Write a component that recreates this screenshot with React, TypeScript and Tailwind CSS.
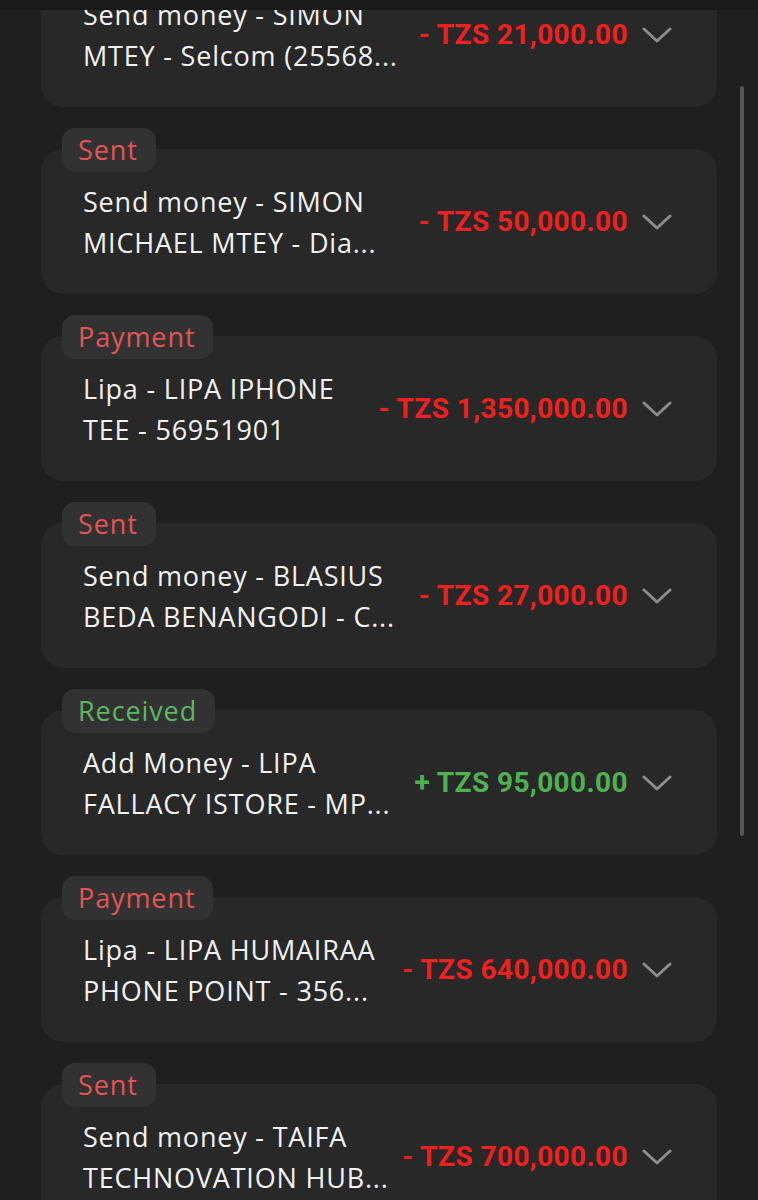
import React from "react";

type Tx = {
  badge?: string;
  kind: "sent" | "payment" | "received";
  line1: string;
  line2: string;
  amount: string;
};

const items: Tx[] = [
  { kind: "sent", badge: "Sent", line1: "Send money - SIMON", line2: "MTEY - Selcom (25568...", amount: "- TZS 21,000.00" },
  { kind: "sent", badge: "Sent", line1: "Send money - SIMON", line2: "MICHAEL MTEY - Dia...", amount: "- TZS 50,000.00" },
  { kind: "payment", badge: "Payment", line1: "Lipa - LIPA IPHONE", line2: "TEE - 56951901", amount: "- TZS 1,350,000.00" },
  { kind: "sent", badge: "Sent", line1: "Send money - BLASIUS", line2: "BEDA BENANGODI - C...", amount: "- TZS 27,000.00" },
  { kind: "received", badge: "Received", line1: "Add Money - LIPA", line2: "FALLACY ISTORE - MP...", amount: "+ TZS 95,000.00" },
  { kind: "payment", badge: "Payment", line1: "Lipa - LIPA HUMAIRAA", line2: "PHONE POINT - 356...", amount: "- TZS 640,000.00" },
  { kind: "sent", badge: "Sent", line1: "Send money - TAIFA", line2: "TECHNOVATION HUB...", amount: "- TZS 700,000.00" },
];

function Chevron() {
  return (
    <svg width="30" height="18" viewBox="0 0 30 18" fill="none" className="shrink-0">
      <path d="M2 3 L15 15 L28 3" stroke="#8c8c8c" strokeWidth="3" strokeLinecap="round" strokeLinejoin="round" />
    </svg>
  );
}

function Card({ tx }: { tx: Tx }) {
  const received = tx.kind === "received";
  return (
    <div className="relative mx-[41px] h-[145px] rounded-[22px] bg-[#282828] flex items-center pl-[42px] pr-[45px]">
      {tx.badge && (
        <div
          className={
            "absolute left-[21px] top-[-21px] h-[44px] rounded-[13px] bg-[#323232] pl-[16px] pr-[18px] flex items-center text-[27px] tracking-[0.9px] " +
            (received ? "text-[#5cb85f]" : "text-[#e25554]")
          }
        >
          {tx.badge}
        </div>
      )}
      <div className="flex-1 min-w-0 text-[#f2f2f2] text-[27px] tracking-[0.8px] leading-[41px] pt-[1px]">
        <div className="whitespace-nowrap">{tx.line1}</div>
        <div className="whitespace-nowrap">{tx.line2}</div>
      </div>
      <div
        className={
          "font-bold text-[28px] tracking-[0.4px] whitespace-nowrap mr-[14px] font-['Roboto',sans-serif] " +
          (received ? "text-[#4cb350]" : "text-[#f0201f]")
        }
      >
        {tx.amount}
      </div>
      <Chevron />
    </div>
  );
}

export default function App() {
  return (
    <div className="relative h-[1200px] w-[758px] overflow-hidden bg-[#1f1f1f] font-['Open_Sans',sans-serif]">
      <div className="mt-[-38px] flex flex-col gap-[42px]">
        {items.map((tx, i) => (
          <Card key={i} tx={tx} />
        ))}
      </div>
      <div className="absolute left-0 top-0 h-[10px] w-full bg-[#1a1a1a]" />
      <div className="absolute left-[740px] top-[86px] h-[750px] w-[4px] rounded-full bg-[#565656]" />
    </div>
  );
}
